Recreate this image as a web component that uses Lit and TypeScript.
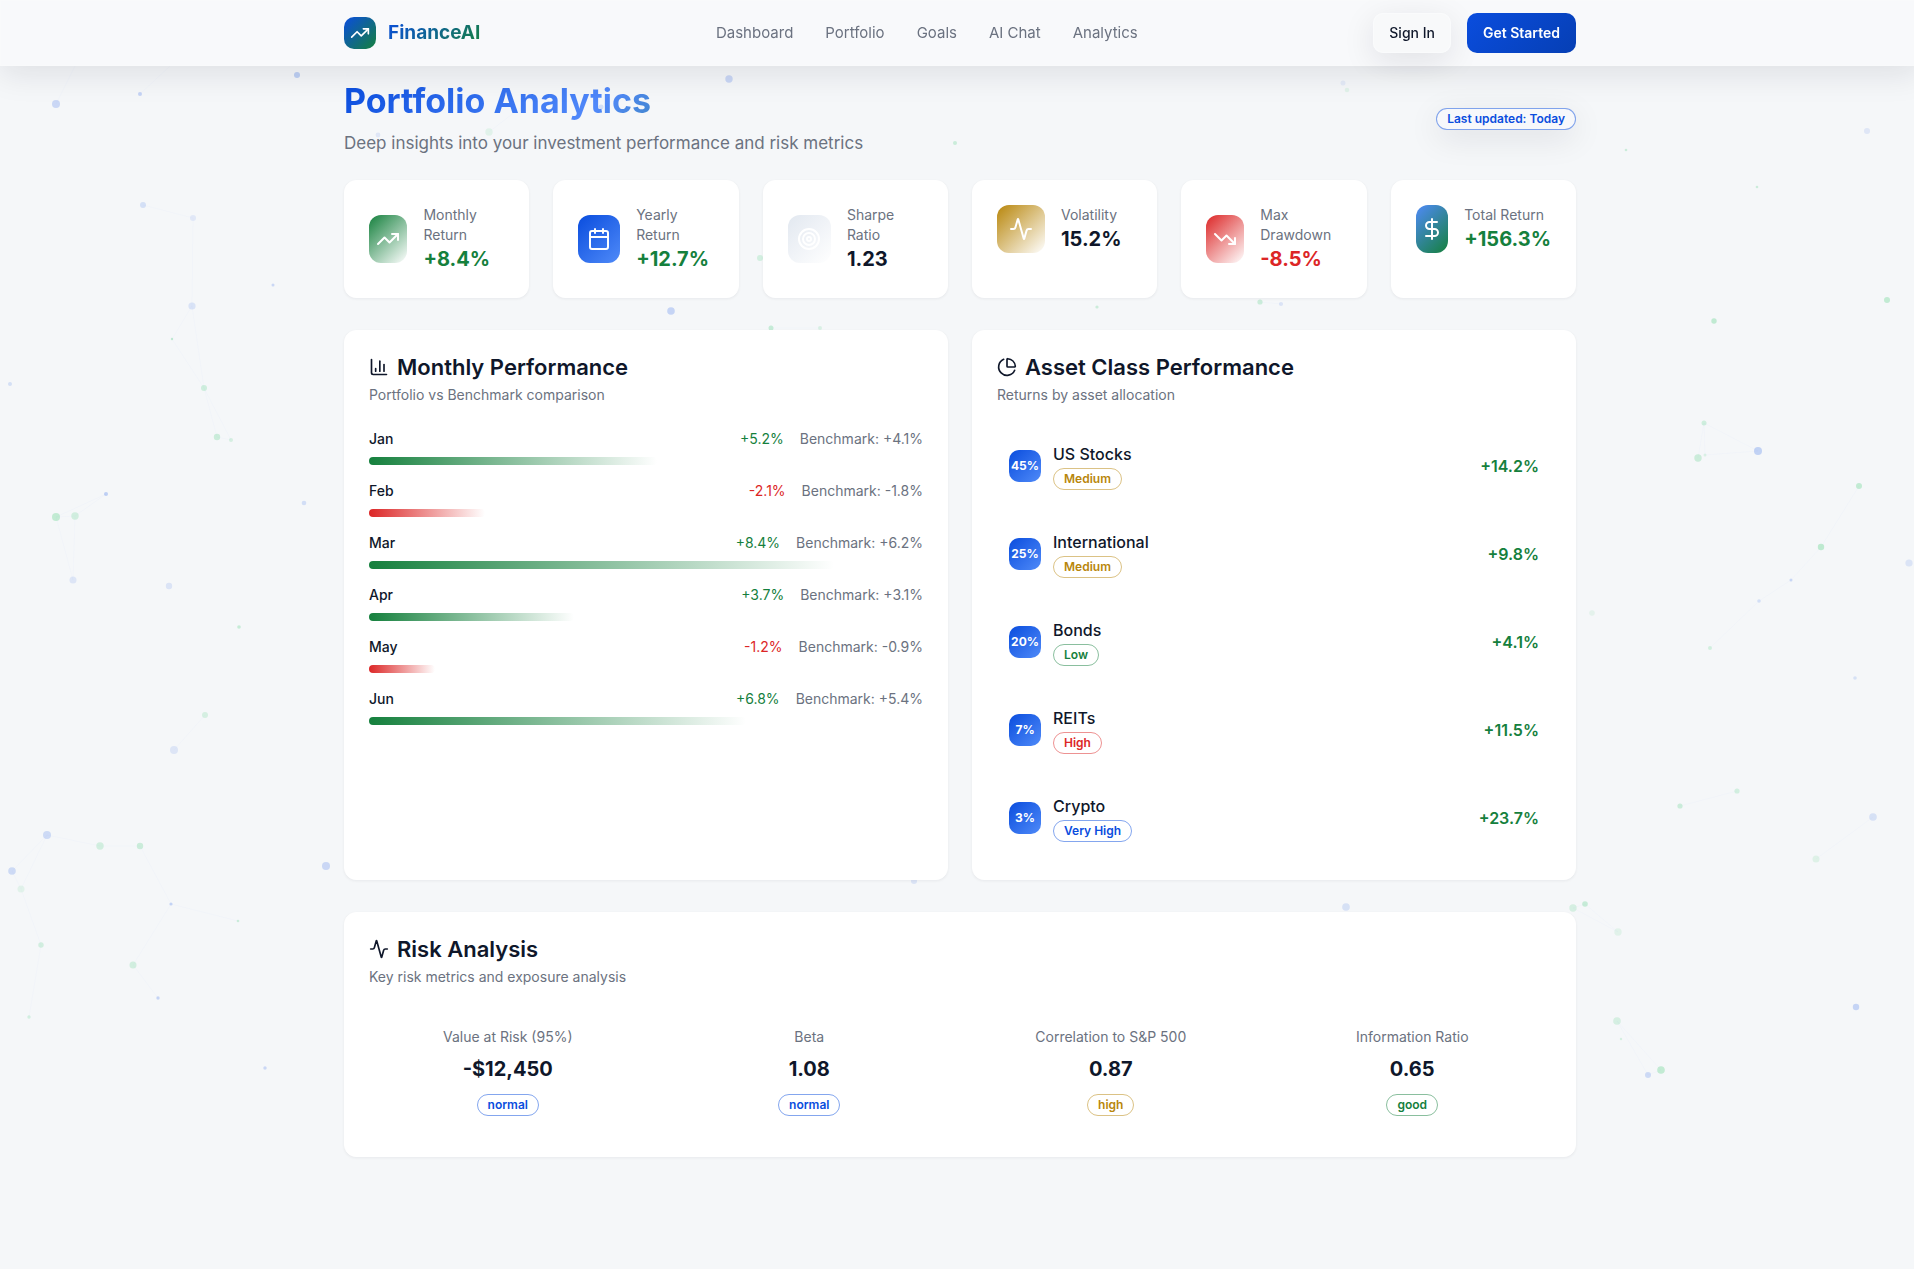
import { LitElement, html, svg, css, type TemplateResult } from "lit";
import { customElement, property } from "lit/decorators.js";
import { classMap } from "lit/directives/class-map.js";

type Tone = "primary" | "success" | "warning" | "danger";

/* 24 x 24 outline icons */
const ICONS: Record<string, TemplateResult> = {
  trendingUp: svg`<polyline points="22 7 13.5 15.5 8.5 10.5 2 17"/><polyline points="16 7 22 7 22 13"/>`,
  trendingDown: svg`<polyline points="22 17 13.5 8.5 8.5 13.5 2 7"/><polyline points="16 17 22 17 22 11"/>`,
  calendar: svg`<path d="M8 2v4"/><path d="M16 2v4"/><rect width="18" height="18" x="3" y="4" rx="2"/><path d="M3 10h18"/>`,
  target: svg`<circle cx="12" cy="12" r="10"/><circle cx="12" cy="12" r="6"/><circle cx="12" cy="12" r="2"/>`,
  activity: svg`<path d="M22 12h-2.48a2 2 0 0 0-1.93 1.46l-2.35 8.36a.25.25 0 0 1-.48 0L9.24 2.18a.25.25 0 0 0-.48 0l-2.35 8.36A2 2 0 0 1 4.49 12H2"/>`,
  dollar: svg`<line x1="12" x2="12" y1="2" y2="22"/><path d="M17 5H9.5a3.5 3.5 0 0 0 0 7h5a3.5 3.5 0 0 1 0 7H6"/>`,
  barChart: svg`<path d="M3 3v16a2 2 0 0 0 2 2h16"/><path d="M18 17V9"/><path d="M13 17V5"/><path d="M8 17v-3"/>`,
  pieChart: svg`<path d="M21 12c.552 0 1.005-.449.95-.998a10 10 0 0 0-8.953-8.951c-.55-.055-.998.398-.998.95v8a1 1 0 0 0 1 1z"/><path d="M21.21 15.89A10 10 0 1 1 8 2.83"/>`,
};

const icon = (name: string, size: number) => html`<svg
  class="icon" width=${size} height=${size} viewBox="0 0 24 24" fill="none" stroke="currentColor"
  stroke-width="2" stroke-linecap="round" stroke-linejoin="round" aria-hidden="true">${ICONS[name]}</svg>`;

type Particle = [number, number, number, "b" | "g", number];
const PARTICLES: Particle[] = [
  [56, 104, 4, "b", 0.2], [140, 94, 2, "b", 0.22], [297, 75, 3, "b", 0.25], [143, 205, 3, "b", 0.15],
  [193, 218, 3, "b", 0.09], [273, 285, 1.5, "b", 0.2], [192, 306, 3.6, "b", 0.13], [172, 339, 1.2, "g", 0.25],
  [10, 384, 2, "b", 0.15], [204, 388, 3, "g", 0.18], [217, 437, 3.2, "g", 0.2], [231, 440, 2, "g", 0.15],
  [106, 494, 2, "b", 0.25], [56, 517, 4, "g", 0.24], [75, 516, 3.7, "g", 0.17], [304, 503, 2.3, "b", 0.16],
  [73, 580, 3.5, "b", 0.11], [169, 586, 3.2, "b", 0.12], [239, 627, 1.8, "g", 0.22], [205, 715, 3, "g", 0.15],
  [174, 750, 4, "b", 0.11], [47, 835, 4, "b", 0.18], [12, 871, 3.8, "b", 0.18], [21, 889, 3.5, "g", 0.09],
  [100, 846, 3.7, "g", 0.17], [140, 846, 3.2, "g", 0.2], [171, 904, 1.6, "b", 0.22], [238, 921, 1.3, "g", 0.2],
  [41, 945, 2.7, "g", 0.17], [133, 965, 3.5, "g", 0.17], [158, 998, 1.7, "b", 0.22], [29, 1017, 1.7, "g", 0.16],
  [326, 866, 4, "b", 0.2], [265, 1068, 1.7, "b", 0.2], [1626, 150, 1.3, "g", 0.2], [1757, 187, 1.3, "g", 0.2],
  [1867, 131, 3, "b", 0.1], [1714, 321, 2.7, "g", 0.25], [1887, 300, 3, "g", 0.24], [1704, 423, 2.5, "g", 0.18],
  [1698, 458, 3.7, "g", 0.2], [1705, 455, 1.5, "g", 0.12], [1758, 451, 4, "b", 0.24], [1859, 486, 3, "g", 0.24],
  [1821, 547, 3.2, "g", 0.26], [1791, 580, 1.5, "b", 0.2], [1759, 601, 1.8, "b", 0.15], [1710, 648, 2, "g", 0.16],
  [1909, 563, 3.6, "b", 0.12], [1592, 613, 2.8, "g", 0.08], [1855, 678, 1.8, "b", 0.14], [1680, 806, 2.6, "g", 0.2],
  [1737, 791, 2.6, "g", 0.16], [1873, 817, 3.8, "b", 0.14], [1816, 859, 3.5, "g", 0.11], [1573, 908, 3.7, "g", 0.15],
  [1585, 904, 2.8, "g", 0.22], [1618, 932, 3.7, "g", 0.09], [1617, 1021, 3.8, "g", 0.15], [1621, 1039, 1.2, "g", 0.15],
  [1648, 1075, 3, "b", 0.18], [1661, 1070, 3.8, "g", 0.24], [1856, 1007, 3.2, "b", 0.22], [729, 79, 3.7, "b", 0.2],
  [601, 107, 2.5, "b", 0.15], [378, 135, 2.4, "b", 0.1], [489, 132, 3.7, "g", 0.09], [955, 143, 2, "g", 0.2],
  [1343, 83, 2.5, "b", 0.07], [1347, 90, 2.3, "g", 0.09], [760, 258, 3, "g", 0.16], [671, 311, 3.8, "b", 0.22],
  [1097, 307, 1.6, "g", 0.2], [1260, 302, 2.6, "g", 0.2], [1281, 304, 2.1, "b", 0.12], [771, 328, 2.5, "g", 0.22],
  [820, 328, 2, "g", 0.13], [1346, 907, 3.8, "b", 0.14], [914, 881, 3, "b", 0.12],
];
const LINKS: [number, number, number, number][] = [
  [143, 205, 193, 218], [193, 218, 192, 306], [192, 306, 172, 339], [172, 339, 204, 388], [192, 306, 204, 388],
  [204, 388, 217, 437], [204, 388, 231, 440], [217, 437, 231, 440], [106, 494, 56, 517], [106, 494, 75, 516],
  [56, 517, 75, 516], [56, 517, 73, 580], [75, 516, 73, 580], [205, 715, 174, 750], [47, 835, 12, 871],
  [47, 835, 21, 889], [12, 871, 21, 889], [47, 835, 100, 846], [100, 846, 140, 846], [140, 846, 171, 904],
  [171, 904, 238, 921], [171, 904, 133, 965], [133, 965, 158, 998], [21, 889, 41, 945], [41, 945, 29, 1017],
  [1704, 423, 1698, 458], [1704, 423, 1705, 455], [1704, 423, 1758, 451], [1705, 455, 1758, 451],
  [1859, 486, 1821, 547], [1821, 547, 1791, 580], [1791, 580, 1759, 601], [1759, 601, 1710, 648],
  [1680, 806, 1737, 791], [1873, 817, 1816, 859], [1585, 904, 1618, 932], [1573, 908, 1618, 932],
  [1573, 908, 1585, 904], [1617, 1021, 1661, 1070], [1617, 1021, 1648, 1075], [1648, 1075, 1661, 1070],
  [56, 104, 75, 66], [140, 94, 170, 66], [489, 132, 520, 108], [1260, 302, 1281, 304], [771, 328, 820, 328],
];

const NAV = ["Dashboard", "Portfolio", "Goals", "AI Chat", "Analytics"];

const METRICS = [
  { label: "Monthly Return", value: "+8.4%", icon: "trendingUp", fill: "fill-success", text: "up" },
  { label: "Yearly Return", value: "+12.7%", icon: "calendar", fill: "fill-primary", text: "up" },
  { label: "Sharpe Ratio", value: "1.23", icon: "target", fill: "fill-muted", text: "" },
  { label: "Volatility", value: "15.2%", icon: "activity", fill: "fill-warning", text: "" },
  { label: "Max Drawdown", value: "-8.5%", icon: "trendingDown", fill: "fill-danger", text: "down" },
  { label: "Total Return", value: "+156.3%", icon: "dollar", fill: "fill-accent", text: "up" },
];

const MONTHS = [
  { month: "Jan", value: 5.2, benchmark: 4.1 },
  { month: "Feb", value: -2.1, benchmark: -1.8 },
  { month: "Mar", value: 8.4, benchmark: 6.2 },
  { month: "Apr", value: 3.7, benchmark: 3.1 },
  { month: "May", value: -1.2, benchmark: -0.9 },
  { month: "Jun", value: 6.8, benchmark: 5.4 },
];

const ASSETS: { name: string; share: string; risk: string; tone: Tone; value: string }[] = [
  { name: "US Stocks", share: "45%", risk: "Medium", tone: "warning", value: "+14.2%" },
  { name: "International", share: "25%", risk: "Medium", tone: "warning", value: "+9.8%" },
  { name: "Bonds", share: "20%", risk: "Low", tone: "success", value: "+4.1%" },
  { name: "REITs", share: "7%", risk: "High", tone: "danger", value: "+11.5%" },
  { name: "Crypto", share: "3%", risk: "Very High", tone: "primary", value: "+23.7%" },
];

const RISKS: { name: string; value: string; status: string; tone: Tone }[] = [
  { name: "Value at Risk (95%)", value: "-$12,450", status: "normal", tone: "primary" },
  { name: "Beta", value: "1.08", status: "normal", tone: "primary" },
  { name: "Correlation to S&P 500", value: "0.87", status: "high", tone: "warning" },
  { name: "Information Ratio", value: "0.65", status: "good", tone: "success" },
];

const signed = (n: number) => `${n > 0 ? "+" : ""}${n.toFixed(1)}%`;

@customElement("tone-badge")
export class ToneBadge extends LitElement {
  @property() tone: Tone = "primary";
  static styles = css`
    :host {
      display: inline-flex;
      align-items: center;
      box-sizing: border-box;
      border: 1px solid;
      border-radius: 11px;
      padding: 2px 10px;
      font-size: 12px;
      line-height: 16px;
      font-weight: 600;
    }
    :host([tone="primary"]) { color: var(--primary); border-color: rgb(10 77 222 / 0.5); }
    :host([tone="success"]) { color: var(--success); border-color: rgb(21 128 61 / 0.5); }
    :host([tone="warning"]) { color: var(--warning); border-color: rgb(184 134 11 / 0.5); }
    :host([tone="danger"]) { color: var(--danger); border-color: rgb(220 38 38 / 0.5); }
  `;
  render() {
    return html`<slot></slot>`;
  }
}

@customElement("app-root")
export class AppRoot extends LitElement {
  static styles = css`
    :host {
      --primary: #0a4dde;
      --primary-light: #4f8af8;
      --success: #15803d;
      --warning: #b8860b;
      --danger: #dc2626;
      --ink: #0f172a;
      --muted: #6b7280;
      --lift: 0 8px 32px rgb(15 23 42 / 0.1);
      display: block;
      overflow: hidden;
      background: #f5f7f9;
      color: var(--ink);
      font-family: Inter, "Liberation Sans", sans-serif;
      font-size: 16px;
      line-height: 24px;
    }
    * { box-sizing: border-box; }
    h1, h2, h3, p, ul { margin: 0; padding: 0; }
    ul { list-style: none; }
    .icon { flex: none; display: block; }
    .page {
      position: relative;
      min-height: 100vh;
      margin-right: -6px;
    }
    .particles {
      position: absolute;
      inset: 0;
      width: 100%;
      height: 100%;
    }
    .dot-b { fill: #1d5be6; }
    .dot-g { fill: #22c55e; }
    .link { stroke: #1d5be6; stroke-opacity: 0.02; }

    .wrap {
      max-width: 1280px;
      margin: 0 auto;
      padding: 0 24px;
    }
    .topbar {
      position: sticky;
      top: 0;
      z-index: 1;
      border: 1px solid rgb(255 255 255 / 0.2);
      background: #f8f9fb;
      box-shadow: var(--lift);
    }
    .topbar .wrap {
      display: flex;
      align-items: center;
      justify-content: space-between;
      height: 64px;
    }
    .brand {
      display: flex;
      align-items: center;
      gap: 12px;
      text-decoration: none;
    }
    .logo {
      display: flex;
      align-items: center;
      justify-content: center;
      width: 32px;
      height: 32px;
      border-radius: 10px;
      color: #fff;
      background: linear-gradient(135deg, var(--primary), var(--success));
    }
    .brand-name {
      font-size: 19px;
      line-height: 28px;
      font-weight: 700;
      color: transparent;
      background: linear-gradient(135deg, var(--primary), var(--success));
      -webkit-background-clip: text;
      background-clip: text;
    }
    .nav { display: flex; gap: 32px; font-size: 15px; }
    .nav a { color: var(--muted); text-decoration: none; }
    .actions { display: flex; gap: 16px; }
    .btn {
      height: 40px;
      padding: 0 16px;
      border: 0;
      border-radius: 10px;
      font: inherit;
      font-size: 14px;
      line-height: 20px;
      font-weight: 500;
      color: var(--ink);
    }
    .btn-glass {
      background: #f8f9fa;
      box-shadow: var(--lift), inset 0 0 0 1px #fafbfc;
    }
    .btn-solid {
      color: #fff;
      font-weight: 600;
      background: linear-gradient(135deg, var(--primary), #063fb4);
    }

    .main {
      position: relative;
      display: flex;
      flex-direction: column;
      gap: 32px;
      padding-top: 15px;
      padding-bottom: 32px;
    }
    .intro {
      display: flex;
      align-items: center;
      justify-content: space-between;
      margin-bottom: -9px;
    }
    .title {
      margin-bottom: 8px;
      font-size: 34px;
      line-height: 40px;
      font-weight: 700;
      color: transparent;
      background: linear-gradient(135deg, var(--primary) 0%, #5189fa 50%, var(--success) 100%);
      -webkit-background-clip: text;
      background-clip: text;
    }
    .subtitle { font-size: 17px; line-height: 28px; color: var(--muted); }
    .updated { background: #f7f8fb; box-shadow: var(--lift); }

    .card {
      padding: 24px;
      border: 1px solid #fff;
      border-radius: 12px;
      background: #fff;
      box-shadow: 0 1px 3px rgb(15 23 42 / 0.06);
    }
    .metrics { display: grid; grid-template-columns: repeat(6, minmax(0, 1fr)); gap: 24px; }
    .metric { display: flex; align-items: center; gap: 16px; }
    .tile {
      display: flex;
      align-items: center;
      justify-content: center;
      width: 48px;
      min-width: 0;
      height: 48px;
      border-radius: 12px;
      color: #fff;
    }
    .fill-success { background: linear-gradient(135deg, var(--success), #fff); }
    .fill-primary { background: linear-gradient(135deg, var(--primary), var(--primary-light)); }
    .fill-muted { background: linear-gradient(135deg, #e2e8f0, #fff); }
    .fill-warning { background: linear-gradient(135deg, var(--warning), #fff); }
    .fill-danger { background: linear-gradient(135deg, var(--danger), #fff); }
    .fill-accent { background: linear-gradient(135deg, var(--primary-light), var(--success)); }
    .label { font-size: 14px; line-height: 20px; color: var(--muted); }
    .figure { font-size: 20px; line-height: 28px; font-weight: 700; }
    .up { color: var(--success); }
    .down { color: var(--danger); }

    .columns { display: grid; grid-template-columns: repeat(2, minmax(0, 1fr)); gap: 24px; }
    .head { display: flex; flex-direction: column; gap: 6px; margin-bottom: 24px; }
    .head h2 {
      display: flex;
      align-items: center;
      gap: 8px;
      font-size: 22px;
      line-height: 24px;
      font-weight: 600;
    }

    .months { display: flex; flex-direction: column; gap: 16px; font-size: 14px; line-height: 20px; }
    .month { display: flex; flex-direction: column; gap: 8px; }
    .month-row { display: flex; justify-content: space-between; }
    .month-name { font-weight: 500; }
    .month-values { display: flex; gap: 16px; }
    .bench { color: var(--muted); }
    .bar { height: 8px; border-radius: 4px; }
    .bar-up { background: linear-gradient(90deg, var(--success), #fff); }
    .bar-down { background: linear-gradient(90deg, var(--danger), #fff); }

    .assets { display: flex; flex-direction: column; gap: 16px; padding: 1px 0; }
    .asset { display: flex; align-items: center; justify-content: space-between; padding: 12px; }
    .asset-info { display: flex; align-items: center; gap: 12px; }
    .asset-text { display: flex; flex-direction: column; align-items: flex-start; gap: 2px; }
    .share {
      display: flex;
      align-items: center;
      justify-content: center;
      width: 32px;
      height: 32px;
      border-radius: 10px;
      color: #fff;
      font-size: 12px;
      line-height: 16px;
      font-weight: 700;
      background: linear-gradient(135deg, var(--primary), var(--primary-light));
    }
    .asset h3 { font-size: 16px; line-height: 24px; font-weight: 500; }
    .asset-value { font-weight: 600; }

    .risks { display: grid; grid-template-columns: repeat(4, minmax(0, 1fr)); gap: 24px; }
    .risk { display: flex; flex-direction: column; gap: 8px; padding: 16px; text-align: center; }
  `;

  private panelHead(iconName: string, title: string, text: string) {
    return html`<header class="head">
      <h2>${icon(iconName, 20)}<span>${title}</span></h2>
      <p class="label">${text}</p>
    </header>`;
  }

  render() {
    return html`
      <div class="page">
        <svg class="particles" aria-hidden="true">
          ${LINKS.map(([a, b, c, d]) => svg`<line class="link" x1=${a} y1=${b} x2=${c} y2=${d}/>`)}
          ${PARTICLES.map(([x, y, r, hue, o]) => svg`<circle class="dot-${hue}" cx=${x} cy=${y} r=${r} fill-opacity=${o}/>`)}
        </svg>

        <header class="topbar">
          <div class="wrap">
            <a class="brand" href="#">
              <span class="logo">${icon("trendingUp", 20)}</span>
              <span class="brand-name">FinanceAI</span>
            </a>
            <nav class="nav">${NAV.map((item) => html`<a href="#">${item}</a>`)}</nav>
            <div class="actions">
              <button class="btn btn-glass" type="button">Sign In</button>
              <button class="btn btn-solid" type="button">Get Started</button>
            </div>
          </div>
        </header>

        <main class="wrap main">
          <div class="intro">
            <div>
              <h1 class="title">Portfolio Analytics</h1>
              <p class="subtitle">Deep insights into your investment performance and risk metrics</p>
            </div>
            <tone-badge class="updated" tone="primary">Last updated: Today</tone-badge>
          </div>

          <section class="metrics">
            ${METRICS.map(
              (m) => html`<article class="card">
                <div class="metric">
                  <span class="tile ${m.fill}">${icon(m.icon, 24)}</span>
                  <div>
                    <p class="label">${m.label}</p>
                    <p class=${classMap({ figure: true, up: m.text === "up", down: m.text === "down" })}>${m.value}</p>
                  </div>
                </div>
              </article>`
            )}
          </section>

          <div class="columns">
            <section class="card">
              ${this.panelHead("barChart", "Monthly Performance", "Portfolio vs Benchmark comparison")}
              <ul class="months">
                ${MONTHS.map(
                  (m) => html`<li class="month">
                    <div class="month-row">
                      <span class="month-name">${m.month}</span>
                      <span class="month-values">
                        <span class=${m.value > 0 ? "up" : "down"}>${signed(m.value)}</span>
                        <span class="bench">Benchmark: ${signed(m.benchmark)}</span>
                      </span>
                    </div>
                    <div class="bar ${m.value > 0 ? "bar-up" : "bar-down"}" style="width:${Math.round(Math.abs(m.value) * 10)}%"></div>
                  </li>`
                )}
              </ul>
            </section>

            <section class="card">
              ${this.panelHead("pieChart", "Asset Class Performance", "Returns by asset allocation")}
              <ul class="assets">
                ${ASSETS.map(
                  (a) => html`<li class="asset">
                    <div class="asset-info">
                      <span class="share">${a.share}</span>
                      <div class="asset-text">
                        <h3>${a.name}</h3>
                        <tone-badge tone=${a.tone}>${a.risk}</tone-badge>
                      </div>
                    </div>
                    <span class="asset-value up">${a.value}</span>
                  </li>`
                )}
              </ul>
            </section>
          </div>

          <section class="card">
            ${this.panelHead("activity", "Risk Analysis", "Key risk metrics and exposure analysis")}
            <div class="risks">
              ${RISKS.map(
                (r) => html`<div class="risk">
                  <p class="label">${r.name}</p>
                  <p class="figure">${r.value}</p>
                  <div><tone-badge tone=${r.tone}>${r.status}</tone-badge></div>
                </div>`
              )}
            </div>
          </section>
        </main>
      </div>
    `;
  }
}
